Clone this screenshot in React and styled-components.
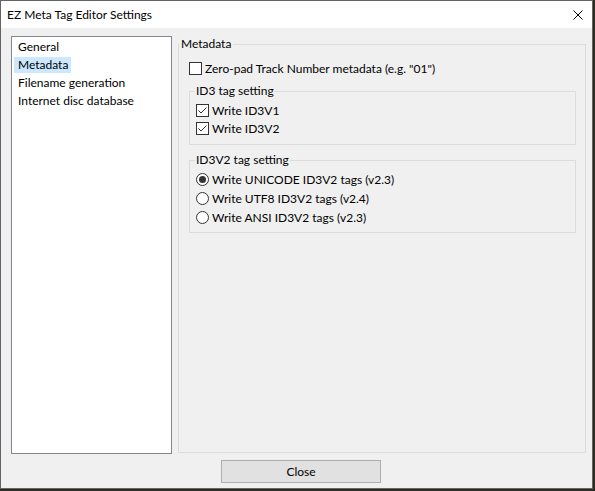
import React from 'react';
import styled, { createGlobalStyle } from 'styled-components';

const GlobalStyle = createGlobalStyle`
  html, body {
    margin: 0;
    padding: 0;
    background: #2d2c24;
  }
  body {
    font-family: Lato, "Noto Sans", sans-serif;
    font-size: 12px;
    color: #000;
  }
`;

const Window = styled.div`
  width: 593px;
  height: 489px;
  box-sizing: border-box;
  border: 1px solid #646464;
  display: flex;
  flex-direction: column;
  background: #f0f0f0;
`;

const TitleBar = styled.div`
  height: 27px;
  background: #fff;
  display: flex;
  align-items: center;
  justify-content: space-between;
  padding: 0 9px 0 6px;
`;

const Title = styled.span`
  font-size: 12px;
  line-height: 16px;
`;

const Client = styled.div`
  flex: 1;
  display: flex;
  flex-direction: column;
  padding: 8px 6px 5px 10px;
  min-height: 0;
`;

const Body = styled.div`
  flex: 1;
  display: flex;
  gap: 6px;
  min-height: 0;
`;

const ListBox = styled.ul`
  list-style: none;
  margin: 0;
  padding: 1px 0 0 2px;
  width: 161px;
  box-sizing: border-box;
  background: #fff;
  border: 1px solid #828790;
`;

const ListItem = styled.li`
  height: 18px;
  display: flex;
  align-items: center;
`;

const ItemLabel = styled.span`
  line-height: 16px;
  padding: 0 3px 0 4px;
  background: ${(p) => (p.$selected ? '#cce8ff' : 'transparent')};
`;

const Group = styled.fieldset`
  margin: 0;
  padding: 0;
  border: 1px solid #dcdcdc;
  min-width: 0;
  flex: ${(p) => (p.$fill ? 1 : 'none')};
  margin-bottom: ${(p) => (p.$fill ? '1px' : '0')};
  margin-top: ${(p) => p.$top || 0}px;
  padding-left: ${(p) => p.$indent || 0}px;
`;

const Legend = styled.legend`
  padding: 0 ${(p) => p.$pad || 2}px;
  line-height: 16px;
`;

const GroupContent = styled.div`
  display: flex;
  flex-direction: column;
  padding: ${(p) => p.$pad};
`;

const Option = styled.label`
  display: flex;
  align-items: center;
  gap: 3px;
  height: ${(p) => p.$h || 18}px;
  white-space: nowrap;
`;

const Footer = styled.div`
  display: flex;
  justify-content: center;
  padding: 6px 0 0 5px;
`;

const Button = styled.button`
  width: 160px;
  height: 23px;
  box-sizing: border-box;
  border: 1px solid #adadad;
  background: #e1e1e1;
  font-family: inherit;
  font-size: 12px;
  color: #000;
  padding: 0;
`;

const CheckBox = ({ checked }) => (
  <svg width="13" height="13" viewBox="0 0 13 13">
    <rect x="0.5" y="0.5" width="12" height="12" fill="#fff" stroke="#333" />
    {checked && (
      <polyline points="2.5,6.5 5,9 10.5,3.5" fill="none" stroke="#333" strokeWidth="1" />
    )}
  </svg>
);

const Radio = ({ checked }) => (
  <svg width="13" height="13" viewBox="0 0 13 13">
    <circle cx="6.5" cy="6.5" r="6" fill="#fff" stroke="#333" />
    {checked && <circle cx="6.5" cy="6.5" r="3.5" fill="#333" />}
  </svg>
);

const CloseIcon = () => (
  <svg width="10" height="10" viewBox="0 0 10 10">
    <path d="M0.5 0.5 L9.5 9.5 M9.5 0.5 L0.5 9.5" stroke="#000" strokeWidth="1" />
  </svg>
);

const pages = ['General', 'Metadata', 'Filename generation', 'Internet disc database'];

const App = () => (
  <>
    <GlobalStyle />
    <Window>
      <TitleBar>
        <Title>EZ Meta Tag Editor Settings</Title>
        <CloseIcon />
      </TitleBar>
      <Client>
        <Body>
          <ListBox>
            {pages.map((p) => (
              <ListItem key={p}>
                <ItemLabel $selected={p === 'Metadata'}>{p}</ItemLabel>
              </ListItem>
            ))}
          </ListBox>
          <Group $fill>
            <Legend>Metadata</Legend>
            <GroupContent $pad="7px 9px 0 10px">
              <Option>
                <CheckBox />
                Zero-pad Track Number metadata (e.g. "01")
              </Option>
              <Group $top={6} $indent={5}>
                <Legend $pad={1}>ID3 tag setting</Legend>
                <GroupContent $pad="2px 0 7px 1px">
                  <Option>
                    <CheckBox checked />
                    Write ID3V1
                  </Option>
                  <Option>
                    <CheckBox checked />
                    Write ID3V2
                  </Option>
                </GroupContent>
              </Group>
              <Group $top={7} $indent={5}>
                <Legend $pad={1}>ID3V2 tag setting</Legend>
                <GroupContent $pad="2px 0 5px 1px">
                  <Option $h={19}>
                    <Radio checked />
                    Write UNICODE ID3V2 tags (v2.3)
                  </Option>
                  <Option $h={19}>
                    <Radio />
                    Write UTF8 ID3V2 tags (v2.4)
                  </Option>
                  <Option $h={19}>
                    <Radio />
                    Write ANSI ID3V2 tags (v2.3)
                  </Option>
                </GroupContent>
              </Group>
            </GroupContent>
          </Group>
        </Body>
        <Footer>
          <Button>Close</Button>
        </Footer>
      </Client>
    </Window>
  </>
);

export default App;
